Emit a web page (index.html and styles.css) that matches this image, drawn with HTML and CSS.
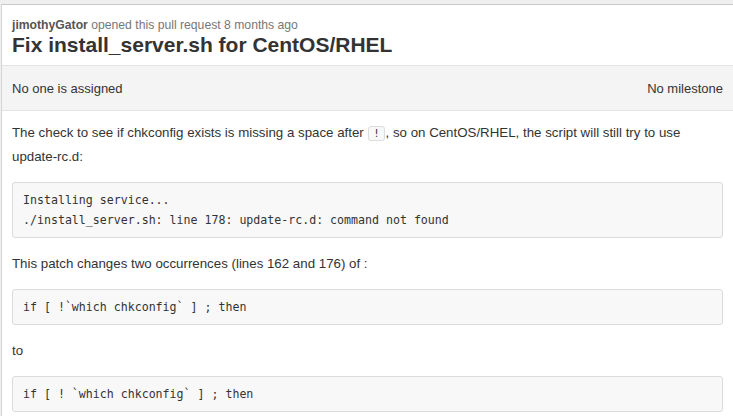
FILE: index.html
```html
<!DOCTYPE html>
<html>
<head>
<meta charset="utf-8">
<link rel="stylesheet" href="styles.css">
</head>
<body>
<div class="page">
  <div class="card">
    <div class="header">
      <div class="meta"><span class="author">jimothyGator</span> opened this pull request 8 months ago</div>
      <h1 class="title">Fix install_server.sh for CentOS/RHEL</h1>
    </div>
    <div class="sidebar">
      <span>No one is assigned</span>
      <span>No milestone</span>
    </div>
    <div class="body">
      <p>The check to see if chkconfig exists is missing a space after <code class="inline">!</code>, so on CentOS/RHEL, the script will still try to use update-rc.d:</p>
      <pre class="block">Installing service...
./install_server.sh: line 178: update-rc.d: command not found</pre>
      <p>This patch changes two occurrences (lines 162 and 176) of :</p>
      <pre class="block">if [ !`which chkconfig` ] ; then</pre>
      <p>to</p>
      <pre class="block">if [ ! `which chkconfig` ] ; then</pre>
    </div>
  </div>
</div>
</body>
</html>
```
FILE: styles.css
```css
html, body {
  margin: 0;
  padding: 0;
  background: #fff;
  overflow: hidden;
}
body {
  width: 733px;
  height: 416px;
  font-family: "Liberation Sans", Arial, sans-serif;
  color: #333;
}
.page {
  background: #efefef;
  padding-top: 4px;
  height: 412px;
}
.card {
  margin-left: 1px;
  width: 760px;
  height: 420px;
  background: #fff;
  border-top: 1px solid #c8c8c8;
  border-left: 1px solid #d6d6d6;
  box-sizing: border-box;
}
.header {
  padding: 13px 10px 0;
  height: 61px;
  box-sizing: border-box;
  border-bottom: 1px solid #e2e2e2;
}
.meta {
  font-size: 12.2px;
  line-height: 14px;
  color: #777;
}
.author {
  font-weight: bold;
  color: #555;
}
.title {
  margin: 0;
  font-size: 21px;
  line-height: 25px;
  font-weight: bold;
  color: #333;
}
.sidebar {
  width: 731px;
  height: 45px;
  box-sizing: border-box;
  background: #f4f4f4;
  border-bottom: 1px solid #e2e2e2;
  display: flex;
  justify-content: space-between;
  align-items: center;
  padding: 0 10px;
  font-size: 13px;
  color: #333;
}
.body {
  width: 711px;
  padding: 10px 0 0 10px;
  font-size: 13.3px;
  color: #333;
}
.body p {
  margin: 0 0 13px;
  line-height: 24px;
}
.inline {
  font-family: "DejaVu Sans Mono", monospace;
  font-size: 10px;
  line-height: 14px;
  padding: 1px 4px;
  background: #f8f8f8;
  border: 1px solid #ddd;
  border-radius: 3px;
  margin: 0 1px;
  color: #333;
}
.block {
  margin: 0 0 14px;
  padding: 7px 10px;
  background: #f8f8f8;
  border: 1px solid #dcdcdc;
  border-radius: 3px;
  font-family: "DejaVu Sans Mono", monospace;
  font-size: 11.6px;
  line-height: 20px;
  color: #333;
}
```
